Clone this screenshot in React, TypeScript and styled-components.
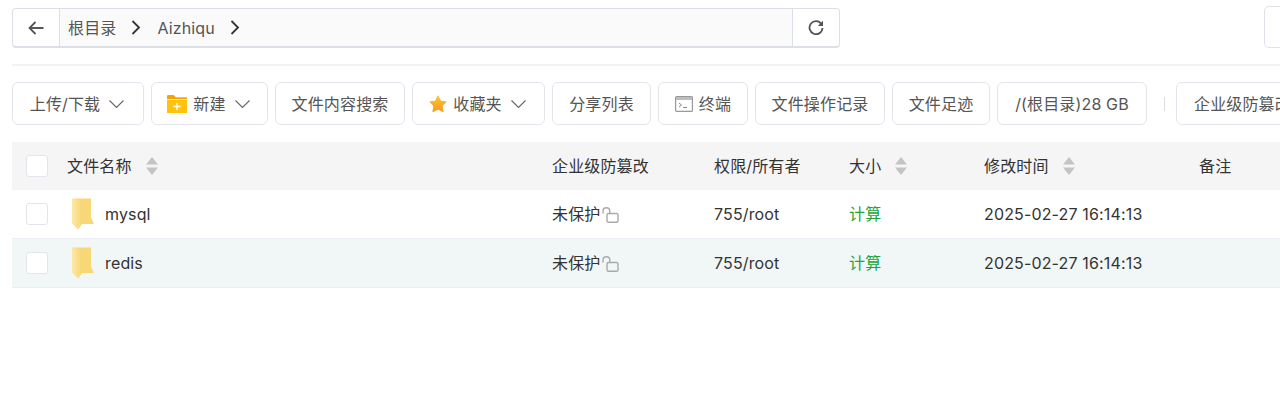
import React from "react";
import styled, { createGlobalStyle } from "styled-components";

const GlobalStyle = createGlobalStyle`
  html, body {
    margin: 0;
    padding: 0;
    background: #fff;
    overflow: hidden;
  }
  body {
    font-family: "Inter", "Noto Sans CJK SC", sans-serif;
    font-size: 16px;
    line-height: 20px;
    letter-spacing: 0.15px;
    color: #333;
  }
`;

const BackIcon = () => (
  <svg width="16" height="14" viewBox="0 0 16 14" fill="none" stroke="#555" strokeWidth="1.800">
    <path d="M15.500 7H1.500M7.500 1l-6 6 6 6" />
  </svg>
);

const RefreshIcon = () => (
  <svg width="16" height="16" viewBox="0 0 16 16" fill="none">
    <path d="M13.500 4.200A6.500 6.500 0 1 0 14.500 8" stroke="#555" strokeWidth="1.800" />
    <path d="M15 .8v5.200H9.800z" fill="#555" />
  </svg>
);

const CrumbChevron = () => (
  <svg width="10" height="15" viewBox="0 0 10 15" fill="none" stroke="#333" strokeWidth="1.800">
    <path d="M1.500 1l6.500 6.500L1.500 14" />
  </svg>
);

const DownChevron = () => (
  <ChevronSvg width="15" height="8" viewBox="0 0 15 8" fill="none" stroke="#666" strokeWidth="1.100">
    <path d="M.5.500l7 7 7-7" />
  </ChevronSvg>
);

const NewFolderIcon = () => (
  <svg width="20" height="18" viewBox="0 0 20 18">
    <path d="M0 1.500C0 .7.7 0 1.500 0h5L9 2.500h11V18H0z" fill="#ffc30f" />
    <path d="M0 1.500C0 .7.7 0 1.500 0h5L9 2.500h11v2H0z" fill="#f5a300" />
    <path d="M0 4.500h20" stroke="#fff" strokeWidth="0.8" />
    <path d="M10 8v7M6.500 11.500h7" stroke="#fff" strokeWidth="1.400" />
  </svg>
);

const StarIcon = () => (
  <svg width="18" height="18" viewBox="0 0 18 18">
    <defs>
      <linearGradient id="star" x1="0" y1="0" x2="0" y2="1">
        <stop offset="0" stopColor="#ffc233" />
        <stop offset="1" stopColor="#f79a1e" />
      </linearGradient>
    </defs>
    <path
      d="M9 .8l2.500 5.300 5.700.8-4.100 4 1 5.800L9 14.100l-5.100 2.600 1-5.800-4.100-4 5.700-.8z"
      fill="url(#star)"
      stroke="url(#star)"
      strokeWidth="1"
      strokeLinejoin="round"
    />
  </svg>
);

const TerminalIcon = () => (
  <svg width="18" height="16" viewBox="0 0 18 16">
    <rect x="0.6" y="0.6" width="16.800" height="14.800" rx="1" fill="#fff" stroke="#999" strokeWidth="1.200" />
    <rect x="1" y="1" width="16" height="3" fill="#bdbdbd" />
    <path d="M4 7l2.500 2L4 11M8 11.500h4" fill="none" stroke="#888" strokeWidth="1" />
  </svg>
);

const FolderIcon = () => (
  <svg width="22" height="32" viewBox="0 0 22 32">
    <defs>
      <linearGradient id="fold" x1="0" y1="0" x2="1" y2="0">
        <stop offset="0" stopColor="#fce9a8" />
        <stop offset="1" stopColor="#f8d775" />
      </linearGradient>
    </defs>
    <path d="M1 .5h18v19l3 6.500H9z" fill="#f8d876" />
    <path d="M0 .5l7 1.500h1v4l1.500 1.500V27l-3.500 4.500-6-6z" fill="url(#fold)" />
  </svg>
);

const LockIcon = () => (
  <LockSvg width="17" height="16" viewBox="0 0 17 16" fill="none" stroke="#aaa" strokeWidth="1.400">
    <rect x="5" y="6.500" width="11" height="8.800" rx="1.500" />
    <path d="M1 6V4.200a3.400 3.400 0 0 1 6.800 0V6.500" strokeLinecap="round" />
  </LockSvg>
);

const SortIcon = () => (
  <SortWrap>
    <svg width="12" height="18" viewBox="0 0 12 18">
      <path d="M6 0l6 7.500H0zM6 18l6-7.500H0z" fill="#c4c4c4" />
    </svg>
  </SortWrap>
);

const rows = ["mysql", "redis"];

const App = () => {
  return (
    <>
      <GlobalStyle />
      <Page>
        <TopBar>
          <AddressBar>
            <NavButton>
              <BackIcon />
            </NavButton>
            <Crumbs>
              <Crumb>根目录</Crumb>
              <CrumbArrow>
                <CrumbChevron />
              </CrumbArrow>
              <Crumb>Aizhiqu</Crumb>
              <CrumbArrow>
                <CrumbChevron />
              </CrumbArrow>
            </Crumbs>
            <NavButton>
              <RefreshIcon />
            </NavButton>
          </AddressBar>
          <SearchStub />
        </TopBar>
        <Divider />
        <Toolbar>
          <ToolButton $w={132}>
            上传/下载
            <DownChevron />
          </ToolButton>
          <ToolButton $w={117}>
            <NewFolderIcon />
            新建
            <DownChevron />
          </ToolButton>
          <ToolButton $w={130}>文件内容搜索</ToolButton>
          <ToolButton $w={133}>
            <StarIcon />
            收藏夹
            <DownChevron />
          </ToolButton>
          <ToolButton $w={99}>分享列表</ToolButton>
          <ToolButton $w={90}>
            <TerminalIcon />
            终端
          </ToolButton>
          <ToolButton $w={130}>文件操作记录</ToolButton>
          <ToolButton $w={98}>文件足迹</ToolButton>
          <ToolButton $w={150}>/(根目录)28 GB</ToolButton>
          <ToolSep />
          <ToolButton $w={140} $clip>
            企业级防篡改
          </ToolButton>
        </Toolbar>
        <HeaderRow>
          <CheckCell>
            <Check />
          </CheckCell>
          <HeadCell>
            文件名称
            <SortIcon />
          </HeadCell>
          <HeadCell>企业级防篡改</HeadCell>
          <HeadCell>权限/所有者</HeadCell>
          <HeadCell>
            大小
            <SortIcon />
          </HeadCell>
          <HeadCell>
            修改时间
            <SortIcon />
          </HeadCell>
          <HeadCell>备注</HeadCell>
        </HeaderRow>
        {rows.map((name, i) => (
          <Row key={name} $active={i === 1}>
            <CheckCell>
              <Check />
            </CheckCell>
            <NameCell>
              <FolderIcon />
              {name}
            </NameCell>
            <Cell>
              未保护
              <LockIcon />
            </Cell>
            <Cell>755/root</Cell>
            <SizeCell>计算</SizeCell>
            <Cell>2025-02-27 16:14:13</Cell>
            <Cell />
          </Row>
        ))}
      </Page>
    </>
  );
};

export default App;

const Page = styled.div`
  width: 1280px;
  height: 420px;
  padding: 6px 0 0 12px;
  box-sizing: border-box;
  overflow: hidden;
`;

const TopBar = styled.div`
  display: flex;
  justify-content: space-between;
  align-items: flex-start;
  height: 43px;
`;

const AddressBar = styled.div`
  margin-top: 2px;
  width: 828px;
  height: 40px;
  display: flex;
  box-sizing: border-box;
  border: 1px solid #dcdfe6;
  border-bottom-width: 2px;
  border-radius: 4px;
`;

const NavButton = styled.div`
  width: 46px;
  flex: none;
  display: flex;
  align-items: center;
  justify-content: center;
  background: #fff;
  border-radius: 4px;
`;

const Crumbs = styled.div`
  flex: 1;
  display: flex;
  align-items: center;
  background: #fafafa;
  border-left: 1px solid #dcdfe6;
  border-right: 1px solid #dcdfe6;
  padding-left: 8px;
  color: #555;
`;

const Crumb = styled.span`
  margin-right: 15px;
`;

const CrumbArrow = styled.span`
  display: flex;
  margin-right: 16px;
`;

const SearchStub = styled.div`
  width: 40px;
  height: 42px;
  margin-right: -24px;
  box-sizing: border-box;
  border: 1px solid #dfe1ea;
  border-radius: 5px;
`;

const Divider = styled.div`
  height: 2px;
  margin-top: 15px;
  background: #f3f3f3;
`;

const Toolbar = styled.div`
  display: flex;
  align-items: center;
  gap: 7px;
  margin-top: 16px;
  width: 1400px;
`;

const ToolButton = styled.div<{ $w: number; $clip?: boolean }>`
  width: ${(p) => p.$w}px;
  height: 43px;
  flex: none;
  box-sizing: border-box;
  display: flex;
  align-items: center;
  justify-content: ${(p) => (p.$clip ? "flex-start" : "center")};
  padding-left: ${(p) => (p.$clip ? "17px" : "0")};
  gap: 6px;
  border: 1px solid #e4e5ec;
  border-radius: 6px;
  color: #555;
  white-space: nowrap;
`;

const ChevronSvg = styled.svg`
  margin: 0 2px 0 3px;
`;

const ToolSep = styled.div`
  width: 1px;
  height: 14px;
  background: #ddd;
  margin: 0 4px 0 10px;
`;

const HeaderRow = styled.div`
  display: grid;
  grid-template-columns: 55px 485px 162px 135px 135px 215px 1fr;
  align-items: center;
  height: 48px;
  margin-top: 17px;
  width: 1268px;
  background: #f5f5f5;
  color: #333;
`;

const Row = styled.div<{ $active: boolean }>`
  display: grid;
  grid-template-columns: 55px 485px 162px 135px 135px 215px 1fr;
  align-items: center;
  height: 49px;
  box-sizing: border-box;
  width: 1268px;
  border-bottom: 1px solid #ebeef5;
  background: ${(p) => (p.$active ? "#f0f7f6" : "#fff")};
`;

const CheckCell = styled.div`
  padding-left: 14px;
  display: flex;
`;

const Check = styled.div`
  width: 22px;
  height: 22px;
  box-sizing: border-box;
  background: #fff;
  border: 1px solid #e4e5ec;
  border-radius: 3px;
`;

const HeadCell = styled.div`
  display: flex;
  align-items: center;
  white-space: nowrap;
`;

const SortWrap = styled.span`
  display: flex;
  margin-left: 14px;
`;

const Cell = styled.div`
  display: flex;
  align-items: center;
  white-space: nowrap;
`;

const LockSvg = styled.svg`
  margin: 2px 0 0 2px;
`;

const NameCell = styled(Cell)`
  gap: 11px;
  padding-left: 5px;
`;

const SizeCell = styled(Cell)`
  color: #20a53a;
`;
